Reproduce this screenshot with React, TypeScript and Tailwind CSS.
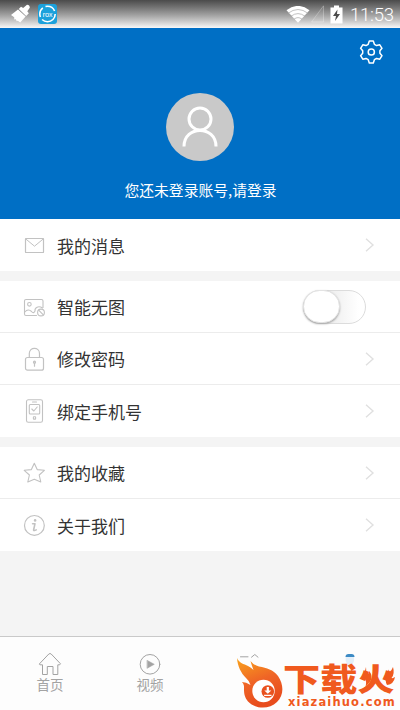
import { useState } from 'react';
import type { ReactNode } from 'react';
import clsx from 'clsx';

const iconProps = {
  fill: 'none',
  stroke: 'currentColor',
  strokeLinecap: 'round',
  strokeLinejoin: 'round',
} as const;

function MailIcon() {
  return (
    <svg width="22" height="24" viewBox="0 0 22 24" {...iconProps}>
      <rect x="2.5" y="5.5" width="18" height="14" rx="0.6" strokeWidth="1.2" />
      <path d="M2.8 6 L11.5 13.2 L20.2 6" />
    </svg>
  );
}

function NoImageIcon() {
  return (
    <svg width="22" height="24" viewBox="0 0 22 24" {...iconProps} strokeWidth="1.1">
      <path d="M13.5 20.5 H3 Q1.5 20.5 1.5 19 V6 Q1.5 4.5 3 4.5 H18.5 Q20 4.5 20 6 V12.5" />
      <circle cx="6.4" cy="9.3" r="1.8" />
      <path d="M1.8 17 C4 14.5 6.5 14.5 8.5 16.5 C10 18.3 11.2 17.8 12 16 C11.5 12.5 15.5 10.3 19.5 13" />
      <circle cx="18" cy="17.5" r="3.4" />
      <path d="M15.7 15.2 L20.3 19.9" />
    </svg>
  );
}

function LockIcon() {
  return (
    <svg width="22" height="24" viewBox="0 0 22 24" {...iconProps} strokeWidth="1.2">
      <rect x="2.5" y="10.5" width="18" height="12.7" rx="2" />
      <path d="M6.3 10.5 V6.6 C6.3 -0.4 16.5 -0.4 16.5 6.6 V10.5" />
      <circle cx="11.5" cy="15.2" r="1" />
      <path d="M11.5 16.2 V19.2" />
    </svg>
  );
}

function PhoneIcon() {
  return (
    <svg width="22" height="24" viewBox="0 0 22 24" {...iconProps} strokeWidth="1.1">
      <rect x="3.5" y="0.8" width="16" height="22.4" rx="1.8" />
      <path d="M9.5 3 H13.5" />
      <rect x="6.3" y="5.5" width="10.4" height="9.5" rx="1" />
      <path d="M8.8 10 L10.8 12 L14.2 8" />
      <rect x="10.4" y="17.8" width="2.2" height="2.3" rx="0.4" />
    </svg>
  );
}

function StarIcon() {
  return (
    <svg width="22" height="24" viewBox="0 0 22 24" {...iconProps} strokeWidth="1.1">
      <path d="M11.3 2.2 L14.2 8.6 L21.4 9.3 L16.2 14 L17.8 21 L11.3 18.2 L4.8 21 L6.4 14 L1.2 9.3 L8.4 8.6 Z" />
    </svg>
  );
}

function InfoIcon() {
  return (
    <svg width="22" height="24" viewBox="0 0 22 24" {...iconProps} strokeWidth="1.2">
      <circle cx="11.4" cy="12.4" r="9.9" />
      <circle cx="12.1" cy="7.4" r="1.3" fill="currentColor" stroke="none" />
      <path d="M9.6 10.7 H12 L10.6 17 Q10.6 18.2 13.2 16.9" strokeWidth="1.6" />
    </svg>
  );
}

function GearIcon() {
  return (
    <svg width="26" height="26" viewBox="0 0 26 26" {...iconProps} strokeWidth="1.5">
      <path d="M11.3 2 H15.3 L16.4 5.3 L18.6 6.6 L21.8 5.8 L24 9.3 L21.9 11.8 V14.2 L24 16.7 L21.8 20.2 L18.6 19.4 L16.4 20.7 L15.3 24 H11.3 L10.2 20.7 L8 19.4 L4.8 20.2 L2.6 16.7 L4.7 14.2 V11.8 L2.6 9.3 L4.8 5.8 L8 6.6 L10.2 5.3 Z" />
      <circle cx="13.3" cy="13" r="3.1" />
    </svg>
  );
}

function Chevron() {
  return (
    <svg width="10" height="16" viewBox="0 0 10 16" fill="none" stroke="#e0e0e0" strokeWidth="1.4">
      <path d="M1 1.7 L8 8 L1 14.3" />
    </svg>
  );
}

function StatusBar() {
  return (
    <div className="flex h-7 items-center justify-between bg-linear-to-b from-[#4b4b4b] via-[#a3a3a3] via-55% to-[#f8f8f8] pr-[6px] pl-[11px] text-white">
      <div className="flex items-center gap-[7px]">
        <svg width="20" height="20" viewBox="0 0 20 20" fill="currentColor">
          <path d="M0 11 L7 5.4 L14.6 12.6 L9.2 18.5 L6.8 16.7 L5.7 17.2 L4.9 15.3 L3.3 15.4 L3.2 13.3 Z" />
          <path d="M7.8 5 L10 2.8 L12.2 4 L16 0.8 Q18.8 1 18.8 3.8 L16.3 7.2 L17.8 9.2 L15.2 12 Z" />
        </svg>
        <div className="relative flex h-5 w-[19px] items-center justify-center rounded-[3px] bg-[#1ba1dc]">
          <svg className="absolute inset-0" width="19" height="20" viewBox="0 0 19 20" fill="none" stroke="white" strokeWidth="1.6">
            <circle cx="9.5" cy="10" r="7.7" strokeDasharray="18 3 10 3 11 3" />
          </svg>
          <span className="text-[7px] leading-none">rox</span>
        </div>
      </div>
      <div className="flex items-center">
        <svg width="24" height="17" viewBox="0 0 24 17" fill="none" stroke="currentColor" strokeWidth="1.1">
          <path d="M0.5 4.3 Q12 -4.5 23.5 4.3 L12 16.8 Z" fill="currentColor" stroke="none" />
          <path d="M2 7.3 Q12 -0.3 22 7.3 M5 10.2 Q12 5 19 10.2 M8 13.2 Q12 10 16 13.2" stroke="#a8a8a8" strokeWidth="0.7" />
        </svg>
        <svg className="ml-px" width="13" height="18" viewBox="0 0 13 18">
          <path d="M12.5 0.8 V17 H0.5 Z" fill="#ffffff11" stroke="#ffffff44" />
        </svg>
        <svg className="ml-[6px]" width="13" height="19" viewBox="0 0 13 19">
          <path d="M4 0.5 H9 V2.5 H12.5 V18.5 H0.5 V2.5 H4 Z" fill="white" />
          <path d="M7.5 4.5 L3 11 H6 L5 16 L10 9 H7 Z" fill="#4c4c4c" />
        </svg>
        <span className="ml-[7px] w-[44px] pt-px font-[Roboto] text-[18.5px] leading-7 font-light tracking-[-0.2px] whitespace-nowrap">11:53</span>
      </div>
    </div>
  );
}

function Profile() {
  return (
    <header className="flex h-[191px] flex-col items-center bg-[#006fc5] text-white">
      <button className="mt-[11px] mr-4 h-[26px] self-end" aria-label="设置">
        <GearIcon />
      </button>
      <div className="mt-7 flex size-[68px] items-center justify-center rounded-full bg-[#c9c9c9]">
        <svg width="38" height="44" viewBox="0 0 38 44" fill="none" stroke="white" strokeWidth="3">
          <circle cx="19" cy="14" r="11" />
          <path d="M3 41.5 C3 20 35 20 35 41.5" />
        </svg>
      </div>
      <p className="mt-[18px] pl-px text-[14.8px] leading-[22px] whitespace-nowrap">您还未登录账号,请登录</p>
    </header>
  );
}

function Toggle() {
  const [on, setOn] = useState(false);
  return (
    <button
      role="switch"
      aria-checked={on}
      aria-label="智能无图"
      onClick={() => setOn(!on)}
      className={clsx(
        'mr-[19px] flex h-[34px] w-[63px] rounded-full border border-[#dcdcdc]',
        on ? 'justify-end bg-[#006fc5]' : 'bg-linear-to-r from-[#ededed] from-40% to-white to-90%',
      )}
    >
      <span className="-mt-px -ml-px h-[33px] w-[37px] rounded-full border border-[#e3e3e3] bg-white shadow-[0_1px_2px_#a6a6a6]" />
    </button>
  );
}

function Row({ icon, label, children }: { icon: ReactNode; label: string; children?: ReactNode }) {
  return (
    <div className="flex h-[52px] items-center justify-between bg-white pr-[15px] pl-[23px] text-[#c2c2c2]">
      <div className="flex items-center gap-3">
        {icon}
        <span className="pt-px text-[17px] leading-6 text-[#333]">{label}</span>
      </div>
      {children ?? <span className="mr-[10px]"><Chevron /></span>}
    </div>
  );
}

function Tab({ label, children }: { label: string; children: ReactNode }) {
  return (
    <div className="flex flex-1 flex-col items-center pt-[15px] text-[#a3a3a3]">
      {children}
      <span className="-mt-[2px] text-[13.5px] leading-5">{label}</span>
    </div>
  );
}

function TabBar() {
  return (
    <nav className="flex h-[74px] border-t border-[#c9c9c9] bg-[#fdfdfd]">
      <Tab label="首页">
        <svg width="24" height="24" viewBox="0 0 24 24" {...iconProps}>
          <path d="M1.5 11.8 L10.8 2 Q12 1 13.2 2 L22.5 11.8 L21.7 12.8 H19.8 V22.5 H15 V14.5 H9.3 V22.5 H4.5 V12.8 H2.3 Z" />
        </svg>
      </Tab>
      <Tab label="视频">
        <svg width="24" height="24" viewBox="0 0 24 24" {...iconProps}>
          <circle cx="12" cy="12.3" r="9.8" />
          <path d="M9.3 8.4 L16.3 12.3 L9.3 16.2 Z" fill="currentColor" strokeWidth="0.5" />
        </svg>
      </Tab>
      <Tab label="">
        <svg width="24" height="24" viewBox="0 0 24 24" {...iconProps}>
          <path d="M2.5 4.8 H10 M13.5 5.2 L16.8 2.5 L20 5.2" />
        </svg>
      </Tab>
      <Tab label="">
        <svg width="24" height="24" viewBox="0 0 24 24" fill="none">
          <path d="M7.7 4.5 V9 L10 14 H14 L16 9 V4.5 Z" fill="#e3eff9" />
          <path d="M7.5 5 Q7.5 2 10.5 2 H13.5 Q16.5 2 16.5 5 Z" fill="#3d8bc5" />
        </svg>
      </Tab>
    </nav>
  );
}

// Site badge sitting over the right half of the tab bar
function SiteBadge() {
  return (
    <div className="absolute right-0 bottom-0 flex h-[54px] w-[164px] text-[#f05a1e]">
      <svg className="shrink-0" width="47" height="54" viewBox="0 0 47 54">
        <defs>
          <linearGradient id="flame" x1="0" y1="0" x2="0.35" y2="1">
            <stop offset="0" stopColor="#f9a31c" />
            <stop offset="0.55" stopColor="#ef6426" />
            <stop offset="1" stopColor="#e84c1d" />
          </linearGradient>
        </defs>
        <path d="M1 2 C3 7 8 8 12 10 Q15 11.5 17.5 14 Q15.5 9 14.5 5 Q18 9.5 23 10.5 C31 12 37 13.5 42 20 C48 29 48 39 41 46 C33 54 19 53 12 45.5 C7.5 40 8 35 8 30 Q7.5 27.5 6 26 Q10 26 14.5 29 Q13.5 25 10 22 C5 17 1.5 10 1 2 Z" fill="url(#flame)" />
        <circle cx="27.5" cy="35" r="11.2" fill="white" />
        <circle cx="31.8" cy="35.5" r="6.3" fill="#e9511e" />
        <path d="M30.7 31 H32.9 V34.5 H35.3 L31.8 37.8 L28.3 34.5 H30.7 Z M28.1 38.8 H35.5 V40.1 H28.1 Z" fill="white" />
      </svg>
      <div className="flex flex-col pt-[5px]">
        <span className="h-[35px] origin-left scale-x-[1.18] text-[31.5px] leading-[33px] font-black whitespace-nowrap">下载火</span>
        <span className="ml-[5px] font-['DejaVu_Sans'] text-[11.5px] leading-3 font-bold tracking-[1.15px] whitespace-nowrap">xiazaihuo.com</span>
      </div>
      {/* curls on both sides of the last character */}
      <svg className="absolute top-[11px] right-[4px]" width="34" height="22" viewBox="0 0 34 22" fill="currentColor">
        <path d="M4 0 Q3.5 4 6 7 Q7.5 5.5 7.3 4 Q11 9 8.5 14 L3.5 20 Q5 14 2.5 11 Q0.5 9 1 6 Q2 8 3 8 Q2.5 4 4 0 Z" />
        <path d="M31 0 Q30 3 27.5 5 Q27.5 3.5 26.5 2.5 Q26.5 6 24.5 9 Q22.5 13 25 18 Q32 17 33 10 Q31 11.5 29.5 11 Q33 7 31 0 Z" />
      </svg>
    </div>
  );
}

export default function App() {
  return (
    <div className="relative flex h-[710px] w-[400px] flex-col overflow-hidden bg-[#f4f4f4] font-['Noto_Sans_CJK_SC',sans-serif]">
      <StatusBar />
      <Profile />
      <main className="flex flex-1 flex-col gap-[10px]">
        <Row icon={<MailIcon />} label="我的消息" />
        <section className="divide-y divide-[#ececec]">
          <Row icon={<NoImageIcon />} label="智能无图">
            <Toggle />
          </Row>
          <Row icon={<LockIcon />} label="修改密码" />
          <Row icon={<PhoneIcon />} label="绑定手机号" />
        </section>
        <section className="divide-y divide-[#ececec]">
          <Row icon={<StarIcon />} label="我的收藏" />
          <Row icon={<InfoIcon />} label="关于我们" />
        </section>
      </main>
      <TabBar />
      <SiteBadge />
    </div>
  );
}
